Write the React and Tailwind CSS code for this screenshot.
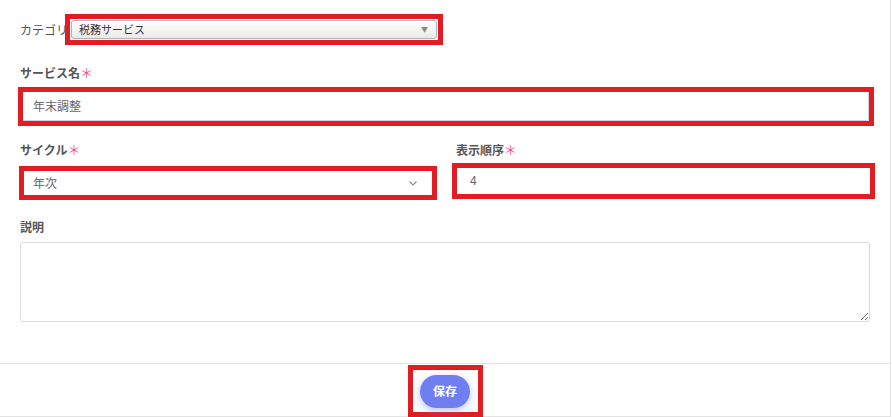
import React from 'react';

const jp = { fontFamily: '"Noto Sans CJK JP", "Noto Sans", sans-serif' };

function Req() {
  return <span className="text-[#f2528c] font-normal text-[13px] leading-[15px]">＊</span>;
}

export default function App() {
  return (
    <div className="w-[892px] h-[417px] bg-white text-[#555]" style={jp}>
      <div className="w-[891px] h-[417px] border-r border-[#e6e6e6] flex flex-col">
        {/* フォーム本体 */}
        <div className="h-[363px] pl-5">
          {/* カテゴリ */}
          <div className="flex items-start pt-[14px] h-[45px]">
            <div className="w-[45px] h-[31px] flex items-center text-[12px] whitespace-nowrap text-[#555]">カテゴリー</div>
            <div className="relative z-10 w-[378px] h-[31px] border-[5px] border-[#e31c23] bg-white p-px">
              <div className="h-[19px] w-full flex items-center justify-between border border-[#b3b3b3] rounded-[3px] bg-gradient-to-b from-white to-[#e9e9e9] pl-[7px] pr-[8px]">
                <span className="text-[11px] text-[#333] leading-none">税務サービス</span>
                <span className="text-[7px] text-[#888] leading-none">▼</span>
              </div>
            </div>
          </div>

          {/* サービス名 */}
          <div className="mt-[20px] h-[15px] flex items-center text-[12px] font-bold text-[#555] leading-[15px]">
            サービス名<Req />
          </div>
          <div className="mt-[7px] -ml-[2px] w-[856px] h-[39px] border-[5px] border-[#e31c23] bg-white">
            <div className="h-full w-full flex items-center border-b border-r border-[#d4d2e2] pl-[10px] text-[12px] text-[#666]">
              年末調整
            </div>
          </div>

          {/* サイクル / 表示順序 */}
          <div className="flex mt-[16px]">
            <div className="w-[432px]">
              <div className="h-[15px] flex items-center text-[12px] font-bold leading-[15px]">
                サイクル<Req />
              </div>
              <div className="mt-[9px] -ml-px w-[418px] h-[34px] border-[5px] border-[#e31c23] bg-white flex items-center justify-between pl-[9px] pr-[15px]">
                <span className="text-[12px] text-[#666]">年次</span>
                <svg width="8" height="5" viewBox="0 0 8 5" fill="none" stroke="#888" strokeWidth="1.1">
                  <path d="M0.5 0.5l3.5 3.5 3.5-3.5" />
                </svg>
              </div>
            </div>
            <div>
              <div className="ml-[4px] h-[15px] flex items-center text-[12px] font-bold leading-[15px]">
                表示順序<Req />
              </div>
              <div className="mt-[6px] w-[423px] h-[36px] border-[5px] border-[#e31c23] bg-white flex items-center pl-[13px]">
                <span className="text-[12px] text-[#666]" style={{ fontFamily: '"Liberation Sans", sans-serif' }}>4</span>
              </div>
            </div>
          </div>

          {/* 説明 */}
          <div className="mt-[19px] h-[15px] flex items-center text-[12px] font-bold leading-[15px]">説明</div>
          <textarea className="mt-[8px] block w-[850px] h-[80px] border border-[#dcdcdc] rounded-[3px] bg-white outline-none" />
        </div>

        {/* フッター */}
        <div className="h-[54px] border-t border-b border-[#e3e3e3] flex justify-center">
          <div className="mt-px w-[75px] h-[52px] border-[5px] border-[#e31c23] bg-white flex items-center justify-center">
            <button className="w-[50px] h-[33px] rounded-full bg-[#6f7ff2] text-white text-[12px] font-bold shadow-[0_3px_8px_rgba(111,127,242,0.45)]">
              保存
            </button>
          </div>
        </div>
      </div>
    </div>
  );
}
